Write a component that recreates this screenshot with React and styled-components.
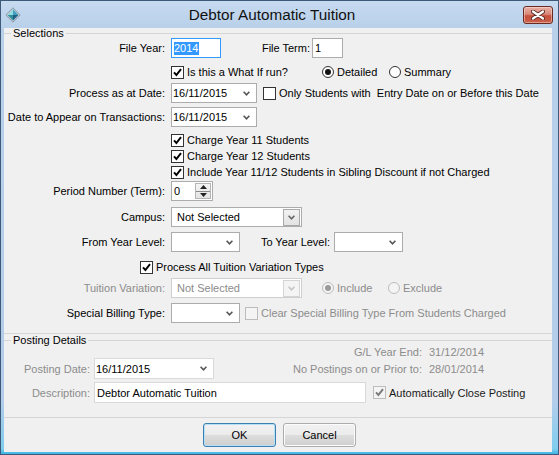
import React from 'react';
import styled, { createGlobalStyle } from 'styled-components';

const Global = createGlobalStyle`
  html, body { margin: 0; padding: 0; background: #fff; }
  body { font-family: "Liberation Sans", Arial, sans-serif; font-size: 11px; color: #000; }
  * { box-sizing: border-box; }
`;

const DIS = '#8c8c8c';

const Window = styled.div`
  width: 559px;
  height: 455px;
  display: flex;
  flex-direction: column;
  border: 1px solid #3f5a78;
  padding: 0 6px 2px 3px;
  background: linear-gradient(to bottom, #c6daf0 0px, #b8d0ea 28px, #b3cdea 400px, #7fcdee 448px, #45b8e6 452px, #45b8e6 100%);
`;

const TitleBar = styled.div`
  height: 27px;
  flex: none;
  display: flex;
  align-items: center;
`;

const IconWrap = styled.span`
  width: 16px;
  height: 16px;
  margin-left: 1px;
  flex: none;
  display: inline-flex;
`;

const Title = styled.div`
  flex: 1;
  text-align: center;
  font-size: 15.3px;
  color: #111;
  padding-top: 1px;
`;

const CloseButton = styled.div`
  width: 30px;
  height: 18px;
  margin-right: -1px;
  margin-top: 1px;
  flex: none;
  border: 1px solid #6a2a22;
  border-radius: 3px;
  background: linear-gradient(to bottom, #e9b0a5 0%, #d9887a 45%, #c7503c 55%, #c9604a 100%);
  box-shadow: inset 0 0 0 1px rgba(255, 235, 230, 0.45);
  display: flex;
  align-items: center;
  justify-content: center;
`;

const Client = styled.div`
  flex: 1;
  background: #f0f0f0;
  display: flex;
  flex-direction: column;
`;

const Group = styled.fieldset`
  margin: ${p => p.$mt || 0}px 0 0 0;
  padding: 0 0 ${p => p.$pb || 0}px 0;
  min-width: 0;
  border: none;
  border-top: 1px solid #d5d5d5;
  border-bottom: 1px solid #d5d5d5;
`;

const Legend = styled.legend`
  margin-left: 7px;
  padding: 0 2px;
  font-size: 11px;
  line-height: 11px;
`;

const Row = styled.div`
  display: flex;
  align-items: center;
  height: ${p => p.$h || 20}px;
  margin-top: ${p => p.$mt || 0}px;
  padding-left: ${p => p.$indent || 0}px;
  white-space: nowrap;
`;

const FieldLabel = styled.span`
  width: ${p => p.$w || 161}px;
  margin-right: ${p => (p.$gap !== undefined ? p.$gap : 6)}px;
  flex: none;
  text-align: right;
  color: ${p => (p.$disabled ? DIS : '#000')};
`;

const TextBox = styled.div`
  width: ${p => p.$w}px;
  height: ${p => p.$h || 20}px;
  flex: none;
  background: #fff;
  border: 1px solid ${p => (p.$focus ? '#3399ff' : p.$light ? '#d9d9d9' : '#acacac')};
  display: flex;
  align-items: center;
  padding-left: ${p => p.$pl || 2}px;
  color: ${p => (p.$disabled ? DIS : '#000')};
`;

const Selected = styled.span`
  background: #3399ff;
  color: #fff;
  line-height: 13px;
  padding-right: 1px;
`;

const ComboBox = styled.div`
  width: ${p => p.$w}px;
  height: ${p => p.$h || 20}px;
  flex: none;
  background: #fff;
  border: 1px solid ${p => (p.$disabled ? '#cfcfcf' : p.$light ? '#d9d9d9' : '#acacac')};
  display: flex;
  align-items: center;
  padding: 0 ${p => (p.$btn ? 1 : 6)}px 0 ${p => p.$pl || 1}px;
  color: ${p => (p.$disabled ? DIS : '#000')};
`;

const ComboText = styled.span`
  flex: 1;
`;

const DropButton = styled.span`
  width: 17px;
  height: 17px;
  flex: none;
  border: 1px solid ${p => (p.$disabled ? '#d4d4d4' : '#a9a9a9')};
  background: ${p => (p.$disabled ? '#f4f4f4' : 'linear-gradient(to bottom, #f2f2f2, #e2e2e2)')};
  display: flex;
  align-items: center;
  justify-content: center;
`;

const SpinBox = styled.div`
  width: ${p => p.$w}px;
  height: 20px;
  flex: none;
  background: #fff;
  border: 1px solid #acacac;
  display: flex;
  align-items: center;
  padding: 1px 1px 1px 2px;
`;

const SpinButtons = styled.span`
  width: 16px;
  height: 100%;
  flex: none;
  display: flex;
  flex-direction: column;
  border: 1px solid #b5b5b5;
  background: linear-gradient(to bottom, #f4f4f4, #e4e4e4);
`;

const SpinHalf = styled.span`
  flex: 1;
  display: flex;
  align-items: center;
  justify-content: center;
  border-top: ${p => (p.$bottom ? '1px solid #8a8a8a' : 'none')};
`;

const InlineLabel = styled.span`
  width: ${p => p.$w}px;
  margin-left: ${p => p.$ml || 0}px;
  margin-right: ${p => p.$mr || 0}px;
  flex: none;
  text-align: right;
  color: ${p => (p.$disabled ? DIS : '#000')};
`;

const Option = styled.span`
  display: inline-flex;
  align-items: center;
  gap: 3px;
  width: ${p => (p.$w ? `${p.$w}px` : 'auto')};
  margin-left: ${p => p.$ml || 0}px;
  flex: none;
  color: ${p => p.$color || '#000'};
  white-space: pre;
`;

const CheckSquare = styled.span`
  width: 13px;
  height: 13px;
  flex: none;
  border: 1px solid ${p => (p.$disabled ? '#bcbcbc' : '#333')};
  background: ${p => (p.$disabled ? '#f4f4f4' : '#fff')};
  display: inline-flex;
  align-items: center;
  justify-content: center;
`;

const RadioCircle = styled.span`
  width: 12px;
  height: 12px;
  flex: none;
  border-radius: 50%;
  border: 1px solid ${p => (p.$disabled ? '#bcbcbc' : '#333')};
  background: ${p => (p.$disabled ? '#f4f4f4' : '#fff')};
  display: inline-flex;
  align-items: center;
  justify-content: center;
  &::after {
    content: '';
    width: 6px;
    height: 6px;
    border-radius: 50%;
    background: ${p => (p.$disabled ? '#9a9a9a' : '#111')};
    display: ${p => (p.$on ? 'block' : 'none')};
  }
`;

const InfoLabel = styled.span`
  flex: 1;
  text-align: right;
  color: ${DIS};
`;

const InfoValue = styled.span`
  width: 130px;
  padding-left: 7px;
  flex: none;
  color: ${DIS};
`;

const ButtonRow = styled.div`
  display: flex;
  justify-content: center;
  gap: 7px;
  margin-top: 5px;
  padding-left: 3px;
`;

const Button = styled.div`
  width: 73px;
  height: 24px;
  border: 1px solid ${p => (p.$default ? '#3c7fb1' : '#acacac')};
  border-radius: 3px;
  background: linear-gradient(to bottom, #f2f2f2 0%, #ebebeb 50%, #dddddd 51%, #cfcfcf 100%);
  box-shadow: ${p => (p.$default ? 'inset 0 0 0 1px #b6e0f8' : 'inset 0 0 0 1px #fcfcfc')};
  display: flex;
  align-items: center;
  justify-content: center;
  font-size: 11px;
`;

const Chevron = ({ color = '#5a5a5a' }) => (
  <svg width="7" height="5" viewBox="0 0 7 5" style={{ flex: 'none' }}>
    <path d="M0.6 0.8 L3.5 3.8 L6.4 0.8" fill="none" stroke={color} strokeWidth="1.6" />
  </svg>
);

const Check = ({ checked, disabled }) => (
  <CheckSquare $disabled={disabled}>
    {checked && (
      <svg width="9" height="9" viewBox="0 0 9 9">
        <path d="M1 4.4 L3.4 7 L8 1.2" fill="none" stroke={disabled ? '#7a7a7a' : '#000'} strokeWidth="2" />
      </svg>
    )}
  </CheckSquare>
);

const Combo = ({ w, text, btn, disabled, light, h, pl }) => (
  <ComboBox $w={w} $btn={btn} $disabled={disabled} $light={light} $h={h} $pl={pl}>
    <ComboText>{text}</ComboText>
    {btn ? (
      <DropButton $disabled={disabled}>
        <Chevron color={disabled ? '#c4c4c4' : '#666'} />
      </DropButton>
    ) : (
      <Chevron color={disabled ? '#c4c4c4' : '#555'} />
    )}
  </ComboBox>
);

const AppIcon = () => (
  <IconWrap>
    <svg width="16" height="16" viewBox="0 0 16 16">
      <path d="M8 0.8 L15.2 8 L8 15.2 L0.8 8 Z" fill="#b9c7d2" stroke="#7d8f9e" strokeWidth="0.8" />
      <path d="M8 2.6 L13.4 8 L8 8 Z" fill="#3f9fbe" />
      <path d="M8 2.6 L2.6 8 L8 8 Z" fill="#8fdde0" />
      <path d="M2.6 8 L8 13.4 L8 8 Z" fill="#2f8e99" />
      <path d="M13.4 8 L8 13.4 L8 8 Z" fill="#1d5f86" />
    </svg>
  </IconWrap>
);

export default function App() {
  return (
    <>
      <Global />
      <Window>
        <TitleBar>
          <AppIcon />
          <Title>Debtor Automatic Tuition</Title>
          <CloseButton>
            <svg width="14" height="10" viewBox="0 0 14 10">
              <path d="M2 1.5 L12 8.5 M12 1.5 L2 8.5" stroke="#5b2a24" strokeWidth="4" strokeLinecap="round" />
              <path d="M2 1.5 L12 8.5 M12 1.5 L2 8.5" stroke="#fff" strokeWidth="2.2" strokeLinecap="round" />
            </svg>
          </CloseButton>
        </TitleBar>
        <Client>
          <Group $pb={10}>
            <Legend>Selections</Legend>
            <Row $mt={-1}>
              <FieldLabel>File Year:</FieldLabel>
              <TextBox $w={50} $focus><Selected>2014</Selected></TextBox>
              <InlineLabel $w={89} $mr={2}>File Term:</InlineLabel>
              <TextBox $w={31}>1</TextBox>
            </Row>
            <Row $h={16} $mt={6} $indent={167}>
              <Option $w={151}><Check checked />Is this a What If run?</Option>
              <Option $w={67}><RadioCircle $on />Detailed</Option>
              <Option><RadioCircle />Summary</Option>
            </Row>
            <Row $mt={3}>
              <FieldLabel>Process as at Date:</FieldLabel>
              <Combo w={86} text="16/11/2015" />
              <Option $ml={6}><Check />Only Students with  Entry Date on or Before this Date</Option>
            </Row>
            <Row $mt={4}>
              <FieldLabel>Date to Appear on Transactions:</FieldLabel>
              <Combo w={86} text="16/11/2015" />
            </Row>
            <Row $h={16} $mt={5} $indent={167}>
              <Option><Check checked />Charge Year 11 Students</Option>
            </Row>
            <Row $h={16} $indent={167}>
              <Option><Check checked />Charge Year 12 Students</Option>
            </Row>
            <Row $h={16} $indent={167}>
              <Option><Check checked />Include Year 11/12 Students in Sibling Discount if not Charged</Option>
            </Row>
            <Row $mt={1}>
              <FieldLabel>Period Number (Term):</FieldLabel>
              <SpinBox $w={42}>
                <ComboText>0</ComboText>
                <SpinButtons>
                  <SpinHalf>
                    <svg width="7" height="4" viewBox="0 0 7 4"><path d="M0 4 L3.5 0 L7 4 Z" fill="#222" /></svg>
                  </SpinHalf>
                  <SpinHalf $bottom>
                    <svg width="7" height="4" viewBox="0 0 7 4"><path d="M0 0 L3.5 4 L7 0 Z" fill="#222" /></svg>
                  </SpinHalf>
                </SpinButtons>
              </SpinBox>
            </Row>
            <Row $mt={6}>
              <FieldLabel>Campus:</FieldLabel>
              <Combo w={131} text="Not Selected" btn pl={5} />
            </Row>
            <Row $mt={5}>
              <FieldLabel>From Year Level:</FieldLabel>
              <Combo w={69} text="" />
              <InlineLabel $w={90} $mr={4}>To Year Level:</InlineLabel>
              <Combo w={69} text="" />
            </Row>
            <Row $h={16} $mt={7} $indent={136}>
              <Option><Check checked />Process All Tuition Variation Types</Option>
            </Row>
            <Row $mt={3}>
              <FieldLabel $disabled>Tuition Variation:</FieldLabel>
              <Combo w={131} text="Not Selected" btn disabled pl={5} />
              <Option $ml={20} $w={66} $color={DIS}><RadioCircle $on $disabled />Include</Option>
              <Option $color={DIS}><RadioCircle $disabled />Exclude</Option>
            </Row>
            <Row $mt={5}>
              <FieldLabel>Special Billing Type:</FieldLabel>
              <Combo w={69} text="" />
              <Option $ml={5} $color={DIS}><Check disabled />Clear Special Billing Type From Students Charged</Option>
            </Row>
          </Group>
          <Group $mt={1} $pb={14}>
            <Legend>Posting Details</Legend>
            <Row $h={12}>
              <InfoLabel>G/L Year End:</InfoLabel>
              <InfoValue>31/12/2014</InfoValue>
            </Row>
            <Row $h={21}>
              <FieldLabel $w={86} $gap={4} $disabled>Posting Date:</FieldLabel>
              <Combo w={120} h={21} text="16/11/2015" light />
              <InfoLabel>No Postings on or Prior to:</InfoLabel>
              <InfoValue>28/01/2014</InfoValue>
            </Row>
            <Row $h={21} $mt={3}>
              <FieldLabel $w={86} $gap={4} $disabled>Description:</FieldLabel>
              <TextBox $w={272} $h={21} $light>Debtor Automatic Tuition</TextBox>
              <Option $ml={7} $color="#1a1a1a"><Check checked disabled />Automatically Close Posting</Option>
            </Row>
          </Group>
          <ButtonRow>
            <Button $default>OK</Button>
            <Button>Cancel</Button>
          </ButtonRow>
        </Client>
      </Window>
    </>
  );
}
